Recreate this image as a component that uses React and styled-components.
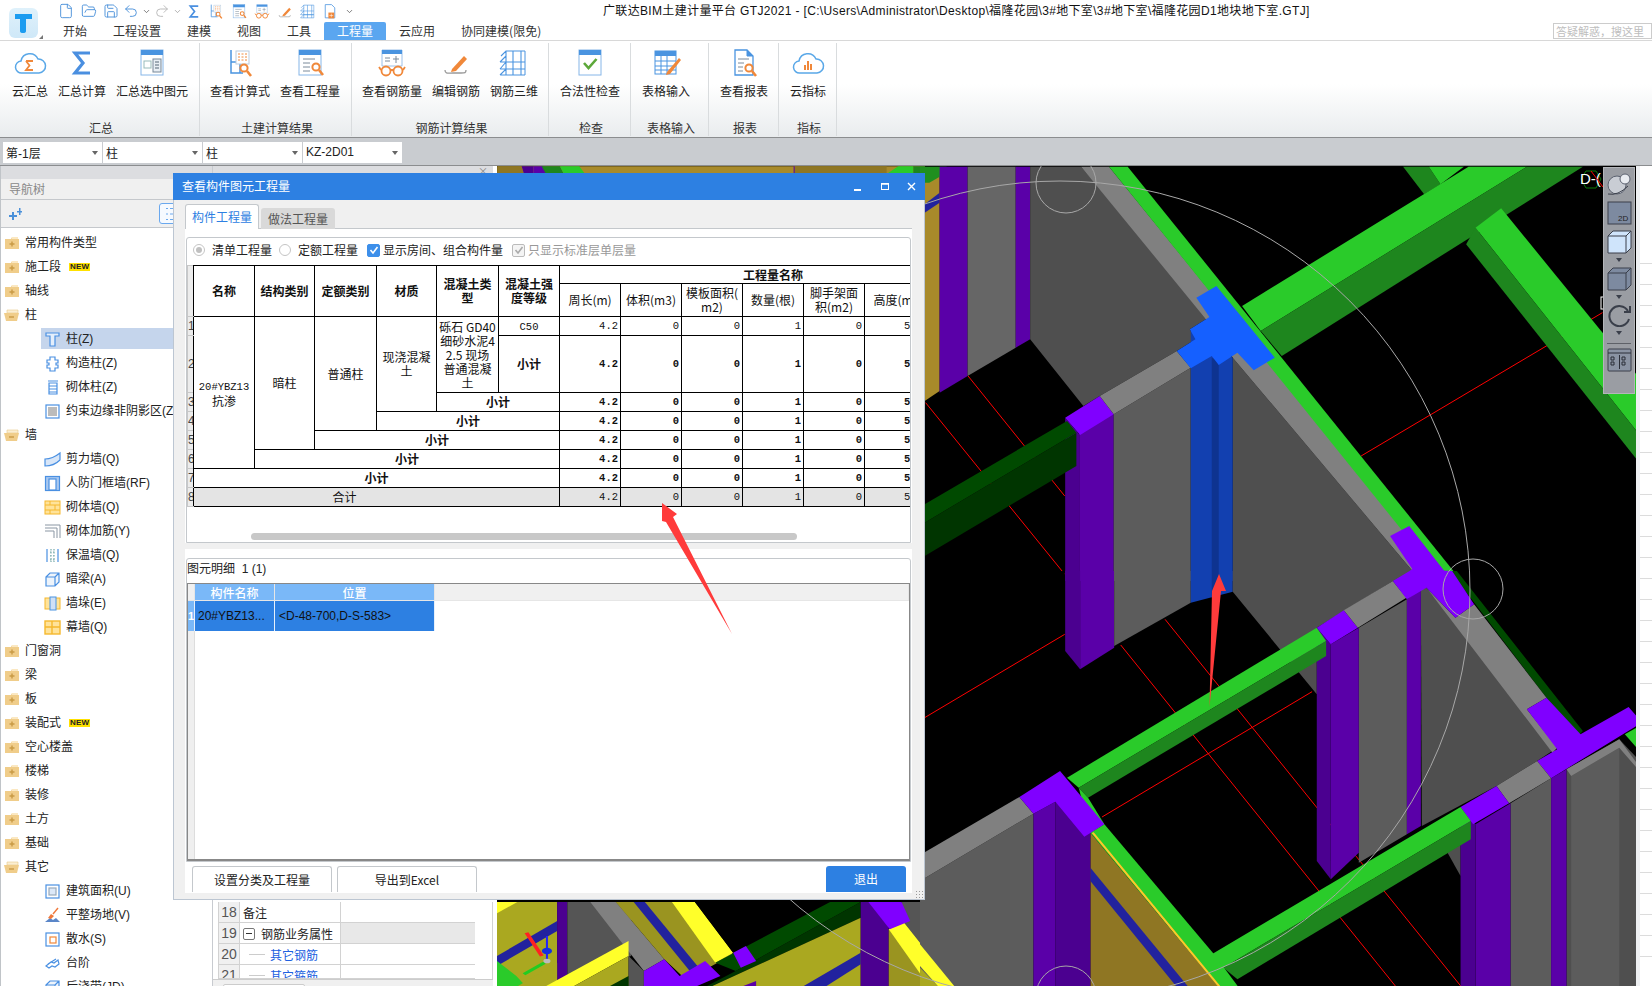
import React from "react";
import styled, { createGlobalStyle } from "styled-components";
import { File, FolderOpen, Save, Undo2, Redo2, ChevronDown } from "lucide-react";

const Global = createGlobalStyle`
  html, body { margin: 0; padding: 0; background: #fff; }
  * { box-sizing: border-box; }
  #root { width: 1652px; height: 986px; }
`;

const CJK = `"Noto Sans CJK SC", "Liberation Sans", sans-serif`;
const LAT = `"Liberation Sans", "Noto Sans CJK SC", sans-serif`;
const MONO = `"Liberation Mono", "Noto Sans CJK SC", monospace`;

const Page = styled.div`
  position: relative; width: 1652px; height: 986px; overflow: hidden;
  display: flex; flex-direction: column;
  font: 12px/1.2 ${CJK}; color: #222; background: #fff;
`;

/* ---------- header ---------- */
const Header = styled.header`
  display: flex; height: 41px; border-bottom: 1px solid #d8d8d8; flex: none;
`;
const LogoCell = styled.div`
  width: 50px; flex: none; padding: 8px 0 0 9px; position: relative;
  &::after { content: ""; position: absolute; right: 7px; bottom: 1px; border: 2px solid transparent; border-right-color: #777; border-bottom-color: #777; }
`;
const HeadRight = styled.div`flex: 1; display: flex; flex-direction: column; min-width: 0;`;
const QuickRow = styled.div`display: flex; align-items: center; height: 22px; position: relative;`;
const QuickIcons = styled.div`display: flex; align-items: center; width: 553px; padding-left: 4px; gap: 0; flex: none; color: #4a90d9;`;
const QuickSlot = styled.span`
  width: ${p => p.$w || 23}px; height: 17px; display: flex; align-items: center; justify-content: center; flex: none;
`;
const AppTitle = styled.div`font: 12px/21px ${LAT}; color: #111; white-space: nowrap; letter-spacing: 0.34px;`;
const TabRow = styled.nav`display: flex; align-items: flex-end; height: 18px;`;
const TabItem = styled.div`
  padding: 0 13px; height: 18px; line-height: 18px; white-space: nowrap; color: ${p => (p.$active ? "#fff" : "#333")};
  background: ${p => (p.$active ? "#5aa6f0" : "transparent")}; border-radius: 2px 2px 0 0;
`;
const AskBox = styled.div`
  margin-left: auto; width: 99px; height: 16px; margin-bottom: 1px; border: 1px solid #ccc; color: #bdbdbd;
  font-size: 11px; line-height: 14px; padding-left: 2px; white-space: nowrap; overflow: hidden;
`;

/* ---------- ribbon ---------- */
const Ribbon = styled.section`
  display: flex; height: 97px; flex: none; border-bottom: 1px solid #8b8d8f;
  background: linear-gradient(#fff 0%, #fff 45%, #e9ecee 100%);
`;
const RibbonGroup = styled.div`
  width: ${p => p.$w}px; flex: ${p => (p.$w ? "none" : 1)}; padding: 2px 0 1px; display: flex; flex-direction: column;
`;
const GroupInner = styled.div`
  flex: 1; display: flex; flex-direction: column; border-right: 1px solid ${p => (p.$last ? "transparent" : "#d9dcde")};
`;
const GroupButtons = styled.div`flex: 1; display: flex; padding-left: ${p => p.$pl || 0}px;`;
const RibbonButton = styled.div`
  width: ${p => p.$w}px; flex: none; display: flex; flex-direction: column; align-items: center; padding-top: 5px; white-space: nowrap;
  svg { display: block; height: 30px; margin-bottom: 6px; }
`;
const GroupLabel = styled.div`height: 20px; line-height: 23px; padding-left: 3px; text-align: center; color: #333;`;

/* ---------- combo bar ---------- */
const ComboBar = styled.div`
  height: 27px; flex: none; background: #c9ccd0; display: flex; gap: 1px; padding: 4px 0 0 3px;
`;
const Combo = styled.div`
  width: 99px; height: 21px; background: #fff; padding-left: 3px; line-height: 21px; position: relative;
  font-family: ${LAT}; font-size: 12px; color: #222;
  &::after { content: ""; position: absolute; right: 4px; top: 9px; border: 3px solid transparent; border-top: 4px solid #666; }
  span { font-family: ${CJK}; }
`;

/* ---------- main ---------- */
const Main = styled.main`flex: 1; display: flex; min-height: 0; border-top: 1px solid #8b8d8f;`;

const Nav = styled.aside`width: 212px; flex: none; display: flex; flex-direction: column; overflow: hidden; border-left: 1px solid #c0c4c8; background: #fff;`;
const NavStrip = styled.div`height: 13px; background: #dcdde0; flex: none;`;
const NavHead = styled.div`
  height: 21px; flex: none; background: #f0f0f0; border-bottom: 1px solid #c5c8cc; color: #888; line-height: 20px; padding-left: 8px;
`;
const NavTools = styled.div`
  height: 28px; flex: none; background: #f0f0f0; border-bottom: 1px solid #c5c8cc; position: relative; padding: 8px 0 0 7px;
`;
const NavToolBtn = styled.div`
  position: absolute; left: 158px; top: 3px; width: 30px; height: 21px; border: 1px solid #6aa8ee; border-radius: 3px; background: #f6faff;
  padding: 3px 0 0 5px; display: flex;
`;
const TreeList = styled.div`padding-top: 3px; flex: 1; overflow: hidden;`;
const TreeRow = styled.div`
  height: 24px; display: flex; align-items: center; white-space: nowrap; position: relative;
  font-family: ${LAT}; padding-left: ${p => (p.$child ? 43 : 3)}px; color: #222;
  ${p => p.$selected && `&::before { content: ""; position: absolute; left: 40px; right: 0; top: 1px; bottom: 2px; background: #c5d5ec; }`}
  > * { position: relative; }
  svg { flex: none; margin-right: 5px; }
`;
const NewBadge = styled.span`
  margin-left: 8px; background: #ffe100; color: #222; font: bold 8px/8px ${LAT}; padding: 0 1px; letter-spacing: 0.2px;
`;

const Props = styled.section`
  width: 285px; flex: none; display: flex; flex-direction: column; border-left: 1px solid #c8cbd0; overflow: hidden; background: #fff;
`;
const PropsTop = styled.div`height: 12px; background: #dcdde0; flex: none; margin-right: 4px; color: #888; text-align: right; padding-right: 5px; font-size: 10px; line-height: 10px;`;
const PropsGrid = styled.div`margin: auto 4px 0 0; padding-left: 5px; padding-right: 17px; background: #fff; border-right: 1px solid #d2d2d2;`;
const PropsRow = styled.div`
  display: grid; grid-template-columns: 21px 101px 136px; height: ${p => p.$h || 21}px; border-bottom: 1px solid #d2d2d2; border-left: 1px solid #d2d2d2; overflow: hidden;
`;
const PropsNum = styled.div`background: #f0f0f0; color: #555; font: 14px/21px ${LAT}; text-align: center; border-right: 1px solid #d2d2d2;`;
const PropsName = styled.div`
  line-height: 21px; padding-left: ${p => (p.$sub ? 30 : 3)}px; color: ${p => (p.$sub ? "#2060e0" : "#222")}; white-space: nowrap; position: relative; border-right: 1px solid #d2d2d2;
  background: #fff; display: flex; align-items: center;
  ${p => p.$sub && `&::before { content: ""; position: absolute; left: 9px; top: 10px; width: 16px; height: 1px; background: #ccc; }`}
`;
const PropsVal = styled.div`background: ${p => (p.$group ? "#e8e8e8" : "#fff")}; border-right: 1px solid #d2d2d2;`;
const MinusBox = styled.span`
  width: 12px; height: 12px; border: 1px solid #777; border-radius: 2px; margin-right: 6px; position: relative; flex: none;
  &::after { content: ""; position: absolute; left: 2px; top: 4px; width: 6px; height: 1px; background: #333; }
`;
const PropsScroll = styled.div`height: 7px; background: #f0f0f0; flex: none; margin-right: 4px; border-top: 1px solid #ccc; padding: 4px 0 0 10px;
  &::after { content: ""; display: block; width: 80px; height: 6px; background: #fff; border: 1px solid #ccc; border-radius: 2px; }
`;

const CanvasWrap = styled.section`width: 1139px; flex: none; position: relative; background: #000; overflow: hidden;`;
const CanvasSvg = styled.svg`display: block; position: absolute; left: 0; top: 0;`;
const ViewBar = styled.div`
  position: absolute; left: 1106px; top: 1px; width: 32px; height: 227px; background: #9a9da3; border: 1px solid #b4b6ba;
  display: flex; flex-direction: column; align-items: center; padding-top: 4px;
`;
const ViewGap = styled.div`height: ${p => p.$h}px; flex: none;`;
const ViewRule = styled.div`width: 24px; height: 1px; background: #5e6168; margin: 3px 0 4px; flex: none;`;
const ViewCaret = styled.div`
  width: 0; height: 0; border: 3px solid transparent; border-top: 4px solid #3a3f4a; border-bottom: 0; margin: 4px 0 5px; flex: none;
`;

const SidePanel = styled.aside`flex: 1; background: #fff; border-left: 4px solid #eef0f2; position: relative; overflow: hidden; padding-top: 77px;`;
const SideRow = styled.div`height: 21px; border-bottom: 1px solid #dcdcdc;`;
const SideThumb = styled.div`position: absolute; left: -4px; top: 374px; width: 4px; height: 100px; background: #5a6470;`;

/* ---------- dialog ---------- */
const Dialog = styled.section`
  position: absolute; left: 173px; top: 173px; width: 752px; height: 727px; background: #f0f0f0;
  border: 1px solid #bcc6d2; border-top: 0; display: flex; flex-direction: column;
`;
const DlgTitle = styled.div`
  height: 27px; flex: none; background: #2d80e2; color: #fff; display: flex; align-items: center; padding: 0 8px 0 9px; margin: 0 -1px;
`;
const DlgCtrls = styled.div`margin-left: auto; display: flex; gap: 16px; align-items: center;`;
const DlgBody = styled.div`flex: 1; display: flex; flex-direction: column; padding: 4px 12px 6px 11px; min-height: 0; position: relative;`;
const DlgTabs = styled.div`display: flex; align-items: flex-end; height: 25px; gap: 2px; flex: none; margin-bottom: -1px; position: relative; z-index: 1;`;
const DlgTab = styled.div`
  width: 74px; height: ${p => (p.$active ? 25 : 21)}px; text-align: center;
  line-height: ${p => (p.$active ? 23 : 22)}px; background: ${p => (p.$active ? "#fff" : "#d9d9d9")}; color: ${p => (p.$active ? "#2d80e2" : "#555")};
  border: ${p => (p.$active ? "1px solid #c4c8cc" : "0")}; border-bottom: 0; border-radius: 3px 3px 0 0;
`;
const Sheet = styled.div`
  flex: 1; background: #fff; border-top: 1px solid #c4c8cc; display: flex; flex-direction: column; min-height: 0;
`;
const Panel = styled.div`
  margin: ${p => p.$mt}px 1px 0; height: ${p => p.$h}px; flex: none; border: 1px solid #c4c8cc; border-radius: 3px 3px 0 0;
  display: flex; flex-direction: column; overflow: hidden; background: #fff;
`;
const Options = styled.div`height: 27px; flex: none; display: flex; align-items: center; padding: 0 0 3px 6px; white-space: nowrap;`;
const Radio = styled.span`
  width: 12px; height: 12px; border-radius: 50%; border: 1px solid #c4c4c4; background: #fff; margin-right: 7px; flex: none; position: relative;
  ${p => p.$on && `&::after { content: ""; position: absolute; left: 2px; top: 2px; width: 6px; height: 6px; border-radius: 50%; background: #c0c0c0; }`}
`;
const Check = styled.span`
  width: 13px; height: 13px; border-radius: 2px; flex: none; margin-right: 3px; display: flex; align-items: center; justify-content: center;
  background: ${p => (p.$muted ? "#f4f4f4" : "#3d8fea")}; border: 1px solid ${p => (p.$muted ? "#bbb" : "#3d8fea")};
`;
const OptLabel = styled.span`color: ${p => (p.$muted ? "#999" : "#222")}; margin-right: ${p => p.$mr || 0}px;`;

const TableClip = styled.div`height: 243px; flex: none; overflow: hidden;`;
const QtyTable = styled.table`
  border-collapse: collapse; table-layout: fixed; width: 799px; font: 12px/14px ${CJK}; color: #111;
`;
const Td = styled.td`
  border: 1px solid #000; padding: ${p => (p.$pr ? `0 ${p.$pr}px 0 0` : 0)}; text-align: center; vertical-align: middle; overflow: hidden; white-space: nowrap;
  height: ${p => p.$h}px; font-weight: ${p => (p.$b ? 700 : 400)};
  background: ${p => (p.$total ? "#e4e4e4" : "#fff")};
`;
const NumTd = styled(Td)`
  text-align: right; padding-right: 2px; font-family: ${MONO}; font-size: 10.5px;
`;
const MonoLine = styled.span`font-family: ${MONO}; font-size: 10.5px;`;
const IdxTd = styled.td`
  border: 1px solid #c8c8c8; border-right: 1px solid #000; background: #ececec; padding: 0; font: 12px/14px ${LAT}; color: #444; text-align: left; overflow: hidden;
  height: ${p => p.$h}px;
`;
const HBar = styled.div`flex: 1; padding: 25px 0 0 64px;
  &::after { content: ""; display: block; width: 546px; height: 7px; border-radius: 4px; background: #c8c8c8; }
`;
const HBarWrap = styled.div`height: 35px; flex: none; display: flex;`;
const Split = styled.div`height: 6px; flex: none; background: #f0f0f0;`;
const PanelHead = styled.div`height: 24px; flex: none; line-height: 20px; font-family: ${LAT}; white-space: nowrap;`;
const ItemGrid = styled.div`flex: 1; border: 1px solid #888; border-bottom-width: 2px; background: #fff; position: relative;
  display: grid; grid-template-columns: 7px 80px 160px 1fr; grid-template-rows: 17px 30px 1fr; `;
const GridHead = styled.div`
  background: ${p => (p.$blank ? "#f0f0f0" : "#7ab8f8")}; color: #fff; text-align: center; line-height: 17px; font-weight: 500; border-right: 1px solid #e6e6e6; border-bottom: 1px solid #e6e6e6;
`;
const GridCell = styled.div`
  background: ${p => (p.$num ? "#7ab8f8" : "#2d80e2")}; color: ${p => (p.$num ? "#fff" : "#111")}; font: ${p => (p.$num ? "bold 11px/30px" : "12px/30px")} ${LAT};
  padding-left: ${p => p.$pl || 0}px; border-right: 1px solid #e6f0fb; white-space: nowrap; overflow: hidden;
`;
const GridIdx = styled.div`background: #efefef; border-right: 1px solid #ddd;`;
const DlgFooter = styled.div`height: 30px; flex: none; display: flex; gap: 5px; padding: 4px 6px 0 7px;`;
const DlgButton = styled.div`
  width: ${p => p.$w || 140}px; height: 26px; text-align: center; line-height: 25px; border-radius: 3px 3px 0 0;
  border: ${p => (p.$primary ? "0" : "1px solid #c4c8cc")}; border-bottom: 0;
  background: ${p => (p.$primary ? "#2d80e2" : "#fff")}; color: ${p => (p.$primary ? "#fff" : "#222")};
  margin-left: ${p => (p.$primary ? "auto" : 0)};
`;
const Grip = styled.div`
  position: absolute; right: 0; bottom: 0; width: 9px; height: 9px; background-image: radial-gradient(#999 0.8px, transparent 1px); background-size: 3px 3px;
`;
const Overlay = styled.svg`position: absolute; left: 0; top: 0; pointer-events: none;`;

/* ---------- icons ---------- */
const BL = "#4a94e0", OR = "#f0883a";
const Ico = ({ children }) => <svg width={34} height={30} viewBox="0 0 34 30" fill="none">{children}</svg>;
const Cloud = ({ c = "#5aa8e8" }) => <path d="M9 25 a6 6 0 0 1 -1-12 a9 9 0 0 1 17-2 a7 7 0 0 1 1 14 z" stroke={c} strokeWidth="1.5" fill="#fff" />;
const Mag = ({ x = 24, y = 22 }) => <g stroke={OR} strokeWidth="2" fill="none"><circle cx={x} cy={y} r="3.6" /><path d={`M${x + 3} ${y + 3} l4 5`} strokeWidth="2.6" /></g>;
const Win = () => <g><rect x="6" y="2" width="22" height="25" fill="#fff" stroke="#86b6e8" /><rect x="6" y="2" width="22" height="5" fill={BL} /></g>;
const icons = {
  cloudSum: <Ico><Cloud /><path d="M13 13 h7 M13 13 l3.5 4.5 -3.5 4.5 h7" stroke={OR} strokeWidth="1.8" /></Ico>,
  sigma: <Ico><path d="M25 5 H10 L18 15 L10 25 H25" stroke="#4a8fe0" strokeWidth="3.2" strokeLinejoin="miter" /></Ico>,
  winCalc: <Ico><Win /><rect x="9" y="13" width="7" height="7" stroke="#9bb" /><rect x="18" y="11" width="8" height="13" fill="#e8eef4" stroke="#789" /><path d="M20 14 h4 M20 17 h4 M20 20 h4" stroke="#567" /></Ico>,
  calcFormula: <Ico><path d="M8 2 v23 h12 M8 14 h9 v11" stroke={BL} strokeWidth="1.5" /><rect x="13" y="3" width="13" height="13" stroke="#bcd" fill="#fff" /><path d="M15 6 h9 M15 9 h9 M15 12 h9" stroke={OR} strokeDasharray="2 1.5" /><Mag x={21} y={20} /></Ico>,
  qty: <Ico><Win /><path d="M10 11 h12 M10 15 h7 M10 19 h7 M10 23 h7" stroke="#7a8a9a" /><Mag x={23} y={19} /></Ico>,
  rebarQty: <Ico><path d="M7 2 h20 v16 h-20 z" fill="#fff" stroke="#9cc0e8" /><rect x="7" y="2" width="20" height="4" fill={BL} /><path d="M10 10 h5 M10 13 h5 M21 8 v7 M18 11 h6" stroke="#7a8a9a" /><g stroke={OR} strokeWidth="1.8"><circle cx="11" cy="23" r="4.5" /><circle cx="23" cy="23" r="4.5" /><path d="M15 22 h4 M6 22 l-2-3 M28 22 l2-3" /></g></Ico>,
  edit: <Ico><path d="M6 22 c0 4 3 3 8 3 h8 c4 0 5 0 5-3" stroke="#999" strokeWidth="1.3" /><path d="M13 21 l12-13 3 3 -11 12 -5 1 z" fill={OR} /></Ico>,
  rebar3d: <Ico><path d="M9 3 v24 M16 3 v24 M24 3 v24 M4 8 L9 3 H28 M3 14 H28 M3 21 H28 M3 27 H28 M3 14 L9 8 M3 21 L9 14 M3 27 L9 21 L28 21" stroke={BL} strokeWidth="1.1" /><path d="M28 3 v24" stroke={BL} /></Ico>,
  check: <Ico><Win /><path d="M11 15 l4.5 5 8-9" stroke="#5da83a" strokeWidth="2.6" /></Ico>,
  tableIn: <Ico><rect x="6" y="3" width="21" height="23" fill="#fff" stroke={BL} /><rect x="6" y="3" width="21" height="5" fill={BL} /><path d="M6 13 h21 M6 18 h21 M6 22 h21 M12 8 v18 M18 8 v18" stroke={BL} /><path d="M18 24 l12-14 2 2 -11 14 -4 1 z" fill={OR} /></Ico>,
  report: <Ico><path d="M8 2 h12 l6 6 v19 H8 z" fill="#fff" stroke={BL} strokeWidth="1.3" /><path d="M20 2 v6 h6" fill={BL} stroke={BL} /><path d="M11 11 h11 M11 15 h6 M11 19 h5 M11 23 h5" stroke="#7a8a9a" /><Mag x={22} y={20} /></Ico>,
  cloudBars: <Ico><Cloud /><path d="M14 22 v-5 M17 22 v-9 M20 22 v-6" stroke={OR} strokeWidth="2" /></Ico>,
  docPlus: <Ico><path d="M8 2 h12 l6 6 v19 H8 z" fill="#fff" stroke={BL} strokeWidth="1.5" /><rect x="14" y="17" width="11" height="11" fill={OR} /><path d="M16 22.5 h7 M19.5 19 v7" stroke="#fff" /></Ico>,
};
const Mini = ({ name }) => <svg width="18" height="17" viewBox="0 0 34 30" fill="none">{icons[name].props.children}</svg>;

const FolderClosed = () => (
  <svg width="16" height="14" viewBox="0 0 16 14"><path d="M1 3 h6 l1-2 h6 v2 h1 v10 H1z" fill="#f0cd8a" /><path d="M8 1 h6 v2 H8z" fill="#fbe8c2" /><path d="M5.5 8 h5 M8 5.5 v5" stroke="#c99a45" strokeWidth="1.4" /></svg>
);
const FolderOpened = () => (
  <svg width="16" height="14" viewBox="0 0 16 14"><path d="M3 2 h11 v3 H3z" fill="#fbeed2" stroke="#e8c98a" strokeWidth="0.6" /><path d="M0 5 h15 l-2 8 H2z" fill="#f0cd8a" /><path d="M5 9 h5" stroke="#c99a45" strokeWidth="1.4" /></svg>
);
const TI = ({ children }) => <svg width="17" height="17" viewBox="0 0 17 17" fill="none" stroke="#4a90e2" strokeWidth="1.2">{children}</svg>;
const Y = "#f5b82e";
const treeIcons = {
  col: <TI><path d="M2 2 h13 v3 h-4 v10 H6 V5 H2z" fill="#e4eefb" /></TI>,
  gz: <TI><path d="M6 2 h5 v3 h3 v3 h-2 v2 h2 v3 h-3 v3 H6 v-3 H3 v-3 h2 V8 H3 V5 h3z" /></TI>,
  brick: <TI><path d="M4 2 h10 M5 4 h8 v11 H5z M5 7 h8 M5 10 h8 M5 13 h8" /></TI>,
  nonshade: <TI><rect x="2" y="2" width="13" height="13" /><rect x="4" y="4" width="9" height="9" fill="#bbb" stroke="none" /></TI>,
  shear: <TI><path d="M1 8 c4 0 10-2 15-6 v7 c-4 4-10 6-15 6z" fill="#d8e6f8" /></TI>,
  door: <TI><rect x="1.5" y="1.5" width="14" height="14" fill="#a9c8f0" /><rect x="5" y="4" width="7" height="11" fill="#fff" /></TI>,
  wall: <svg width="17" height="17" viewBox="0 0 17 17" fill="#ffe39a" stroke={Y}><rect x="1" y="2" width="15" height="13" /><path d="M1 6 h15 M1 11 h15 M6 2 v4 M11 6 v5 M6 11 v4" /></svg>,
  bars: <svg width="17" height="17" viewBox="0 0 17 17" fill="none" stroke="#8a96a3"><path d="M1 2 h15 v13 M1 5 h12 v10 M1 8 h9 v7" /></svg>,
  insul: <TI><path d="M3 2 v13 M14 2 v13" /><path d="M7 2 v13 M10 2 v13 M6 5 h5 M6 9 h5 M6 13 h5" strokeDasharray="1.5 1.5" stroke="#7aa" /></TI>,
  beam: <TI><path d="M2 6 l4-4 h9 v9 l-4 4 H2z M2 6 h9 v9 M11 6 l4-4" fill="#eef4fb" /></TI>,
  pier: <svg width="17" height="17" viewBox="0 0 17 17" fill="#ffe39a" stroke={Y}><rect x="1" y="3" width="15" height="11" /><rect x="6" y="2" width="6" height="13" fill="#cfe0f6" stroke={BL} /></svg>,
  curtain: <svg width="17" height="17" viewBox="0 0 17 17" fill="#ffe39a" stroke={Y} strokeWidth="1.4"><rect x="1" y="2" width="15" height="13" /><path d="M1 8 h15 M8 2 v13" /></svg>,
  area: <TI><rect x="2" y="2" width="13" height="13" /><rect x="5" y="5" width="7" height="7" fill="#dce8f8" stroke="#9ab" /></TI>,
  level: <svg width="17" height="17" viewBox="0 0 17 17"><path d="M1 15 l5-4 3 2 3-2 4 4z" fill="#5a86c8" /><path d="M4 11 l3-4 3 2 -3 3z" fill="#f0783a" /><path d="M9 7 l5-6" stroke="#f0783a" strokeWidth="1.4" /></svg>,
  apron: <TI><rect x="2" y="2" width="13" height="13" /><rect x="6" y="6" width="6" height="6" stroke="#f0883a" /></TI>,
  step: <TI><path d="M2 11 l5-4 3 1 4-3 1 4 -4 3 -3-1 -3 2z M4 9 l8-5" /></TI>,
};

const tree = [
  ["f", "常用构件类型"], ["f", "施工段", 0, 1], ["f", "轴线"], ["o", "柱"],
  ["c", "柱(Z)", "col", 0, 1], ["c", "构造柱(Z)", "gz"], ["c", "砌体柱(Z)", "brick"], ["c", "约束边缘非阴影区(Z)", "nonshade"],
  ["o", "墙"], ["c", "剪力墙(Q)", "shear"], ["c", "人防门框墙(RF)", "door"], ["c", "砌体墙(Q)", "wall"], ["c", "砌体加筋(Y)", "bars"], ["c", "保温墙(Q)", "insul"],
  ["c", "暗梁(A)", "beam"], ["c", "墙垛(E)", "pier"], ["c", "幕墙(Q)", "curtain"],
  ["f", "门窗洞"], ["f", "梁"], ["f", "板"], ["f", "装配式", 0, 1], ["f", "空心楼盖"], ["f", "楼梯"], ["f", "装修"], ["f", "土方"], ["f", "基础"], ["o", "其它"],
  ["c", "建筑面积(U)", "area"], ["c", "平整场地(V)", "level"], ["c", "散水(S)", "apron"], ["c", "台阶", "step"], ["c", "后浇带(JD)", "beam"],
];

const ribbon = [
  { w: 200, pl: 5, label: "汇总", items: [["云汇总", 50, "cloudSum"], ["汇总计算", 54, "sigma"], ["汇总选中图元", 86, "winCalc"]] },
  { w: 152, pl: 5, label: "土建计算结果", items: [["查看计算式", 70, "calcFormula"], ["查看工程量", 70, "qty"]] },
  { w: 197, pl: 2, label: "钢筋计算结果", items: [["查看钢筋量", 76, "rebarQty"], ["编辑钢筋", 52, "edit"], ["钢筋三维", 64, "rebar3d"]] },
  { w: 82, label: "检查", items: [["合法性检查", 82, "check"]] },
  { w: 78, label: "表格输入", items: [["表格输入", 70, "tableIn"]] },
  { w: 70, label: "报表", items: [["查看报表", 70, "report"]] },
  { w: 58, label: "指标", items: [["云指标", 58, "cloudBars"]] },
];

/* ---------- 3D canvas data, in the crop coordinates of each canvas region ---------- */
const G = "#2acb2a", GD = "#1e861e", GX = "#004a00", GXX = "#003500", P = "#5a00a8", PD = "#4b0090", PB = "#8000ff",
  W = "#5c5c5c", WD = "#4f4f4f", B = "#808080", GO = "#a88a2a", GOD = "#8f7623", U = "#22229e", YE = "#ffff2a", OL = "#aaa820", OL2 = "#9a9420";

const polysTop = [
  [GO, "10,60 42,30 42,690 10,720"], [U, "10,130 42,95 42,125 10,155"], ["#1f8f1f", "0,17 57,17 57,35 20,65 0,65"],
  [P, "42,17 102,17 102,645 42,695"], ["#666", "102,17 205,17 205,560 102,645"], [P, "205,17 236,17 236,535 205,560"],
  [WD, "236,17 345,17 620,468 578,505 590,535 550,570 385,705 350,735 236,535"],
  [WD, "670,590 1055,1230 1020,1260 670,1260"],
  [B, "345,17 405,17 1125,1260 1070,1255 670,590 610,470"], [G, "405,17 445,17 1160,1260 1120,1260"],
  [GD, "1035,17 1090,17 1115,70 1080,100"], [G, "1090,17 1165,17 1115,70"],
  [G, "690,435 1175,17 1300,17 730,510"], [GD, "730,510 1300,17 1420,17 775,585"],
  [G, "1190,200 1245,142 1535,640 1535,810"], [GD, "1190,200 1535,810 1535,895 1170,250"],
  [P, "341,770 415,760 415,1260 341,1260"], [PD, "311,770 341,820 341,1260 311,1260"],
  [W, "415,760 580,620 580,1260 415,1260"],
  [GX, "10,1030 315,780 335,815 10,1085"], [GXX, "10,1085 335,815 335,915 10,1185"],
  [PB, "311,770 385,705 415,760 343,822"], [B, "385,705 550,570 580,620 415,760"],
  ["#1240b0", "580,505 670,590 670,1260 580,1260"], ["#0e3390", "625,590 640,600 640,1260 625,1260"],
  ["#1560ff", "592,410 635,375 760,590 715,628 680,575 640,612 625,585 580,622 550,570 590,535 578,505 620,468"],
  [PB, "1007,1125 1048,1095 1140,1260 1015,1260 1055,1225"],
];
const polysLow = [
  [P, "343,0 416,0 416,230 343,295"], [PD, "311,0 343,0 343,295 311,240"],
  [W, "416,0 580,0 580,95 416,225"], ["#1240b0", "580,0 670,0 670,62 580,95"], ["#0e3390", "625,0 640,0 640,75 625,80"],
  [WD, "670,0 1055,0 1013,30 850,170 850,370 670,62"],
  [WD, "1073,55 1085,50 1365,530 1322,570 1235,645 1075,765"],
  [GX, "1135,0 1150,0 1420,480 1410,495 1342,380 1190,100"],
  [B, "1085,50 1147,140 1187,100 1342,380 1300,415 1365,530 1355,545"],
  [W, "940,170 1043,85 1043,790 940,875"], [P, "1043,85 1073,55 1073,765 1043,790"],
  [P, "880,220 940,170 940,845 880,925"], [PD, "850,170 880,220 880,925 850,870"],
  [G, "315,620 850,170 870,210 340,650"], [GD, "340,650 870,210 870,255 360,680"],
  [PB, "850,170 908,118 938,170 880,220"], [B, "908,118 1013,30 1042,80 938,170"],
  [PB, "1013,30 1055,-5 1140,0 1187,100 1147,140 1085,50 1043,85"],
  [WD, "1120,820 1158,800 1158,915"],
  [WD, "1385,595 1498,505 1535,560 1535,1248 1385,1248"], [W, "1395,615 1498,530 1498,1248 1395,1248"],
  [B, "1385,595 1498,505 1535,575 1535,590 1498,530 1395,615"],
  [W, "1265,697 1352,622 1352,1248 1265,1248"], [P, "1352,622 1385,595 1385,1248 1352,1248"],
  [P, "1190,760 1265,697 1265,1248 1190,1248"], [PD, "1158,708 1190,760 1190,1248 1158,1248"],
  [G, "1510,490 1535,470 1535,530"],
  [PB, "1300,415 1342,380 1415,490 1518,408 1535,435 1535,465 1352,622 1322,570 1365,535"],
  [B, "1235,645 1322,570 1352,622 1262,697"], [PB, "1158,708 1235,645 1262,697 1185,760"],
  [G, "1158,708 1180,750 650,1190 625,1150"], [GD, "1180,750 1180,805 680,1225 650,1190"],
  [W, "0,930 243,728 243,1248 0,1248"], [B, "0,852 213,678 243,728 0,930"],
  [GOD, "365,785 640,1248 365,1248"], [U, "365,890 575,1248 550,1248 365,930"],
  [PD, "290,692 365,785 365,1248 290,1248"], [P, "243,728 290,692 290,1248 243,1248"],
  [G, "395,760 630,1150 682,1248 640,1248 365,785"],
  [G, "340,650 360,680 395,760 365,785"],
  [PB, "213,678 300,600 395,760 352,797 290,692 243,728"],
  [OL, "0,1190 40,1248 0,1248"], [YE, "0,1120 75,1248 40,1248 0,1185"],
];
const polysStrip = [
  [OL, "582,18 700,18 700,273 582,273"], [YE, "582,18 622,18 582,52"], [U, "582,180 700,75 700,105 582,210"],
  [G, "582,195 620,240 640,273 582,273"], [PD, "700,18 720,18 720,240 700,260"],
  [OL, "620,273 700,200 700,273"], ["#555", "720,18 845,18 845,180 720,240"], [B, "765,18 815,18 910,190 870,225"],
  [OL2, "815,18 930,18 1045,175 985,225 945,240 910,190"], [U, "850,18 872,18 975,210 960,225"],
  [YE, "925,18 970,18 1045,170 1010,200"], ["#000", "970,18 1235,18 1045,170"],
  [YE, "840,135 675,273 730,273 840,180"], [OL, "840,180 730,273 840,273"], ["#555", "840,180 870,225 870,273 840,273"],
  [GXX, "800,273 840,240 840,273"],
  [GX, "1010,200 1235,18 1295,18 1050,225"], [GXX, "1050,225 1295,18 1295,65 1000,273 990,273"],
  [OL, "1000,273 1295,65 1295,273"], [U, "1180,273 1295,170 1295,205 1225,273"],
  [PD, "1295,18 1350,18 1350,273 1295,273"], [PB, "1045,170 1070,150 1090,195 1060,215"],
  [OL2, "1350,100 1385,80 1480,273 1350,273"], [YE, "1350,100 1380,78 1480,273 1430,273"],
  ["#555", "1375,18 1568,18 1568,273 1480,273 1380,80"], [PB, "1310,18 1375,18 1392,75 1352,100"],
  [PB, "870,225 910,190 940,240 990,195 1020,240 970,273 870,273"], [P, "1060,273 1090,255 1090,273"],
];
const polysTopStrip = [
  [GO, "172,46 1455,46 1455,69 172,69"], [GOD, "172,46 245,46 252,69 172,69"], [PD, "245,46 280,46 280,69 252,69"],
  [P, "280,46 310,46 320,69 280,69"], [GD, "305,46 360,46 372,69 318,69"], [G, "360,46 418,46 435,69 372,69"],
  [GOD, "1062,46 1340,46 1340,69 1062,69"], [P, "1061,46 1064,46 1064,69 1061,69"], [G, "1340,69 1375,46 1420,46 1420,69"], [GD, "1420,46 1455,46 1455,69 1420,69"],
];
const redTop = ["12,725 310,1240", "103,645 310,1005", "945,885 1462,455"];
const redLow = ["10,440 310,190", "430,222 1020,1248", "525,145 1160,1248", "840,362 390,738"];

const Polys = ({ data }) => data.map(([f, pts], i) => <polygon key={i} fill={f} points={pts} />);
const Lines = ({ data, stroke = "#f00" }) => data.map((pts, i) => <polyline key={i} points={pts} fill="none" stroke={stroke} strokeWidth="1" vectorEffect="non-scaling-stroke" />);

const Vals = ({ b, total, h, v = ["4.2", "0", "0", "1", "0", "5.3", "0"] }) => v.map((x, i) => <NumTd key={i} $b={b} $total={total} $h={h}>{x}</NumTd>);

export default function App() {
  return (
    <Page>
      <Global />
      <Header>
        <LogoCell>
          <svg width="29" height="30" viewBox="0 0 29 30">
            <defs><linearGradient id="lg" x1="0" y1="0" x2="0" y2="1"><stop offset="0" stopColor="#dff1fb" /><stop offset="1" stopColor="#cfe8f8" /></linearGradient></defs>
            <rect width="29" height="30" rx="6" fill="url(#lg)" />
            <path d="M6 6 h17 v5 h-6 v12 q0 2 -3 2 q-3 0 -3 -2 V11 H6z" fill="#1c9cf0" />
          </svg>
        </LogoCell>
        <HeadRight>
          <QuickRow>
            <QuickIcons>
              <QuickSlot $w={23}><File size={16} strokeWidth={1.4} /></QuickSlot>
              <QuickSlot $w={23}><FolderOpen size={16} strokeWidth={1.4} /></QuickSlot>
              <QuickSlot $w={22}><Save size={16} strokeWidth={1.4} /></QuickSlot>
              <QuickSlot $w={18}><Undo2 size={16} strokeWidth={1.4} /></QuickSlot>
              <QuickSlot $w={13}><ChevronDown size={9} color="#555" /></QuickSlot>
              <QuickSlot $w={18}><Redo2 size={16} strokeWidth={1.4} color="#b8b8b8" /></QuickSlot>
              <QuickSlot $w={13}><ChevronDown size={9} color="#999" /></QuickSlot>
              <QuickSlot $w={20}><Mini name="sigma" /></QuickSlot>
              <QuickSlot $w={23}><Mini name="calcFormula" /></QuickSlot>
              <QuickSlot $w={23}><Mini name="qty" /></QuickSlot>
              <QuickSlot $w={23}><Mini name="rebarQty" /></QuickSlot>
              <QuickSlot $w={23}><Mini name="edit" /></QuickSlot>
              <QuickSlot $w={23}><Mini name="rebar3d" /></QuickSlot>
              <QuickSlot $w={22}><Mini name="docPlus" /></QuickSlot>
              <QuickSlot $w={16}><ChevronDown size={9} color="#555" /></QuickSlot>
            </QuickIcons>
            <AppTitle>广联达BIM土建计量平台 GTJ2021 - [C:\Users\Administrator\Desktop\福隆花园\3#地下室\3#地下室\福隆花园D1地块地下室.GTJ]</AppTitle>
          </QuickRow>
          <TabRow>
            {["开始", "工程设置", "建模", "视图", "工具", "工程量", "云应用", "协同建模(限免)"].map(t => (
              <TabItem key={t} $active={t === "工程量"}>{t}</TabItem>
            ))}
            <AskBox>答疑解惑，搜这里</AskBox>
          </TabRow>
        </HeadRight>
      </Header>

      <Ribbon>
        {ribbon.map(g => (
          <RibbonGroup key={g.label} $w={g.w}>
            <GroupInner>
              <GroupButtons $pl={g.pl}>
                {g.items.map(([label, w, ic]) => (
                  <RibbonButton key={label} $w={w}>{icons[ic]}{label}</RibbonButton>
                ))}
              </GroupButtons>
              <GroupLabel>{g.label}</GroupLabel>
            </GroupInner>
          </RibbonGroup>
        ))}
        <RibbonGroup />
      </Ribbon>

      <ComboBar>
        <Combo><span>第</span>-1<span>层</span></Combo>
        <Combo><span>柱</span></Combo>
        <Combo><span>柱</span></Combo>
        <Combo>KZ-2D01</Combo>
      </ComboBar>

      <Main>
        <Nav>
          <NavStrip />
          <NavHead>导航树</NavHead>
          <NavTools>
            <svg width="14" height="12" viewBox="0 0 14 12" fill="#4a90d9"><path d="M1 7 h3 V4 h2 v3 h3 v2 H6 v3 H4 V9 H1z" /><path d="M9 3 h2 V0 h1.5 v3 H14 v1.5 h-1.5 V7 H11 V4.5 H9z" /></svg>
            <NavToolBtn>
              <svg width="9" height="14" viewBox="0 0 9 14" fill="none" stroke="#6aa8ee"><path d="M1 1.5 h2 M5 1.5 h4 M1 7 h2 M5 7 h4 M1 12.5 h2 M5 12.5 h4" /></svg>
            </NavToolBtn>
          </NavTools>
          <TreeList>
            {tree.map(([kind, label, ic, isNew, sel]) => (
              <TreeRow key={label} $child={kind === "c"} $selected={sel}>
                {kind === "f" && <FolderClosed />}
                {kind === "o" && <FolderOpened />}
                {kind === "c" && treeIcons[ic]}
                <span>{label}</span>
                {isNew ? <NewBadge>NEW</NewBadge> : null}
              </TreeRow>
            ))}
          </TreeList>
        </Nav>

        <Props>
          <PropsTop>×</PropsTop>
          <PropsGrid>
            <PropsRow><PropsNum>18</PropsNum><PropsName>备注</PropsName><PropsVal /></PropsRow>
            <PropsRow><PropsNum>19</PropsNum><PropsName><MinusBox />钢筋业务属性</PropsName><PropsVal $group /></PropsRow>
            <PropsRow><PropsNum>20</PropsNum><PropsName $sub>其它钢筋</PropsName><PropsVal /></PropsRow>
            <PropsRow $h={14}><PropsNum>21</PropsNum><PropsName $sub>其它箍筋</PropsName><PropsVal /></PropsRow>
          </PropsGrid>
          <PropsScroll />
        </Props>

        <CanvasWrap>
          <CanvasSvg width="1139" height="821" viewBox="497 165 1139 821">
            <rect x="497" y="165" width="1139" height="821" fill="#000" />
            <g transform="translate(200 895) scale(.5102 .3333)"><Polys data={polysStrip} /></g>
            <g transform="translate(440 150) scale(.3333)"><Polys data={polysTopStrip} /></g>
            <g transform="translate(920 160) scale(.4668 .3333)">
              <Lines data={redTop} />
              <Polys data={polysTop} />
            </g>
            <g transform="translate(920 570) scale(.4668 .3333)">
              <rect x="0" y="0" width="310" height="900" fill="#000" />
              <Lines data={redLow} />
              <Polys data={polysLow} />
              <polyline points="370,785 642,1248" fill="none" stroke="#ffc62a" strokeWidth="5" />
            </g>
            <g fill="none" stroke="#a8a8a8" strokeWidth="1">
              <circle cx="1060" cy="590" r="410" />
              <circle cx="1066" cy="182" r="30" />
              <circle cx="1473" cy="588" r="30" />
              <circle cx="1066" cy="995" r="30" />
            </g>
            <polygon points="1586,170 1596,170 1601,178 1596,187 1586,187 1581,178" fill="none" stroke="#0a7a0a" />
            <text x="1580" y="183" fill="#fff" fontSize="15" fontFamily="Liberation Sans">D-(</text>
            <path d="M1591 170 L1603 186" stroke="#f00" />
            <rect x="1601" y="296" width="6" height="12" fill="none" stroke="#fff" />
            <g transform="translate(200 895) scale(.5102 .3333)">
              <path d="M640 110 L670 180" stroke="#f22" strokeWidth="8" />
              <path d="M680 120 V190" stroke="#22f" strokeWidth="4" />
              <circle cx="680" cy="165" r="10" fill="#1430e0" />
              <circle cx="680" cy="195" r="7" fill="#bbb" />
              <path d="M675 200 L635 235" stroke="#2c2" strokeWidth="8" />
            </g>
          </CanvasSvg>
          <ViewBar>
            <svg width="26" height="24" viewBox="0 0 26 24"><circle cx="11" cy="13" r="9" fill="#c9cdd4" stroke="#5c6270" /><circle cx="19" cy="7" r="5" fill="#e8ebf0" stroke="#5c6270" /><path d="M2 22 q10 2 20-8" stroke="#3a3f4a" fill="none" /></svg>
            <ViewGap $h={5} />
            <svg width="25" height="24" viewBox="0 0 25 24"><rect x="1" y="1" width="23" height="22" fill="#7d8aa0" stroke="#3a3f4a" /><text x="11" y="20" fontSize="8" fill="#222" fontFamily="Liberation Sans">2D</text></svg>
            <ViewGap $h={5} />
            <svg width="25" height="24" viewBox="0 0 25 24"><path d="M1 6 l5-5 h18 v17 l-5 5 H1z" fill="#cfe4fb" stroke="#3a3f4a" /><path d="M1 6 h18 v17 M19 6 l5-5" stroke="#3a3f4a" fill="none" /></svg>
            <ViewCaret />
            <svg width="25" height="24" viewBox="0 0 25 24"><path d="M1 6 l5-5 h18 v17 l-5 5 H1z" fill="#7d8aa0" stroke="#3a3f4a" /><path d="M1 6 h18 v17 M19 6 l5-5" stroke="#3a3f4a" fill="none" /></svg>
            <ViewCaret />
            <svg width="25" height="23" viewBox="0 0 25 23" fill="none" stroke="#3a3f4a" strokeWidth="2"><path d="M21 7 A10 10 0 1 0 22 15" /><path d="M23 2 v6 h-6" /></svg>
            <ViewCaret />
            <ViewRule />
            <svg width="25" height="24" viewBox="0 0 25 24"><rect x="1" y="1" width="23" height="22" rx="1" fill="#8a93a3" stroke="#3a3f4a" /><path d="M1 5 h23 M12.5 7 v14 M4 9 h3 v3 H4z M4 14 h3 v3 H4z M15 9 h3 v3 h-3z M15 14 h3 v3 h-3z" stroke="#2a2e38" fill="none" /></svg>
          </ViewBar>
        </CanvasWrap>

        <SidePanel>
          <SideThumb />
          {Array.from({ length: 34 }, (_, i) => <SideRow key={i} />)}
        </SidePanel>
      </Main>

      <Dialog>
        <DlgTitle>
          查看构件图元工程量
          <DlgCtrls>
            <svg width="11" height="11" viewBox="0 0 11 11"><path d="M2 9 h7" stroke="#fff" strokeWidth="2" /></svg>
            <svg width="11" height="11" viewBox="0 0 11 11" fill="none" stroke="#fff"><rect x="2.5" y="2.5" width="7" height="6" /><path d="M2 3 h8" strokeWidth="1.5" /></svg>
            <svg width="11" height="11" viewBox="0 0 11 11" stroke="#fff" strokeWidth="1.4"><path d="M2 2 l7 7 M9 2 l-7 7" /></svg>
          </DlgCtrls>
        </DlgTitle>
        <DlgBody>
          <DlgTabs>
            <DlgTab $active>构件工程量</DlgTab>
            <DlgTab>做法工程量</DlgTab>
          </DlgTabs>
          <Sheet>
            <Panel $mt={8} $h={306}>
              <Options>
                <Radio $on /><OptLabel $mr={7}>清单工程量</OptLabel>
                <Radio /><OptLabel $mr={9}>定额工程量</OptLabel>
                <Check><svg width="10" height="10" viewBox="0 0 10 10" fill="none" stroke="#fff" strokeWidth="1.6"><path d="M1.5 5 l2.5 3 4.5-6" /></svg></Check>
                <OptLabel $mr={9}>显示房间、组合构件量</OptLabel>
                <Check $muted><svg width="10" height="10" viewBox="0 0 10 10" fill="none" stroke="#aaa" strokeWidth="1.6"><path d="M1.5 5 l2.5 3 4.5-6" /></svg></Check>
                <OptLabel $muted>只显示标准层单层量</OptLabel>
              </Options>
              <TableClip>
                <QtyTable>
                  <colgroup>
                    {[6, 61, 60, 62, 60, 62, 61, 61, 61, 61, 61, 61, 61, 61].map((w, i) => <col key={i} style={{ width: w }} />)}
                  </colgroup>
                  <tbody>
                    <tr>
                      <IdxTd rowSpan={2} />
                      <Td rowSpan={2} $b>名称</Td><Td rowSpan={2} $b>结构类别</Td><Td rowSpan={2} $b>定额类别</Td><Td rowSpan={2} $b>材质</Td>
                      <Td rowSpan={2} $b>混凝土类<br />型</Td><Td rowSpan={2} $b>混凝土强<br />度等级</Td>
                      <Td colSpan={7} $b $h={18}>工程量名称</Td>
                    </tr>
                    <tr>
                      <Td $h={33}>周长(m)</Td><Td>体积(m3)</Td><Td>模板面积(<br />m2)</Td><Td>数量(根)</Td><Td>脚手架面<br />积(m2)</Td><Td>高度(m)</Td><Td>合计</Td>
                    </tr>
                    <tr>
                      <IdxTd $h={19}>1</IdxTd>
                      <Td rowSpan={6}><MonoLine>20#YBZ13</MonoLine><br />抗渗</Td>
                      <Td rowSpan={5}>暗柱</Td>
                      <Td rowSpan={4}>普通柱</Td>
                      <Td rowSpan={3}>现浇混凝<br />土</Td>
                      <Td rowSpan={2}>砾石 GD40<br />细砂水泥4<br />2.5 现场<br />普通混凝<br />土</Td>
                      <Td><MonoLine>C50</MonoLine></Td>
                      <Vals h={19} />
                    </tr>
                    <tr>
                      <IdxTd $h={57}>2</IdxTd>
                      <Td $b>小计</Td>
                      <Vals b h={57} />
                    </tr>
                    {[2, 3, 4, 5, 6].map(n => (
                      <tr key={n}>
                        <IdxTd $h={19}>{n + 1}</IdxTd>
                        <Td colSpan={n} $b>小计</Td>
                        <Vals b h={19} />
                      </tr>
                    ))}
                    <tr>
                      <IdxTd $h={19}>8</IdxTd>
                      <Td colSpan={6} $total $pr={64}>合计</Td>
                      <Vals total h={19} />
                    </tr>
                  </tbody>
                </QtyTable>
              </TableClip>
              <HBarWrap><HBar /></HBarWrap>
            </Panel>
            <Split />
            <Panel $mt={9} $h={304}>
              <PanelHead>图元明细&nbsp;&nbsp;1 (1)</PanelHead>
              <ItemGrid>
                <GridHead $blank />
                <GridHead>构件名称</GridHead>
                <GridHead>位置</GridHead>
                <GridHead $blank />
                <GridCell $num>1</GridCell>
                <GridCell $pl={3}>20#YBZ13...</GridCell>
                <GridCell $pl={4}>&lt;D-48-700,D-S-583&gt;</GridCell>
                <div />
                <GridIdx />
                <div /><div /><div />
              </ItemGrid>
            </Panel>
            <DlgFooter>
              <DlgButton $w={140}>设置分类及工程量</DlgButton>
              <DlgButton $w={140}>导出到Excel</DlgButton>
              <DlgButton $primary $w={80}>退出</DlgButton>
            </DlgFooter>
          </Sheet>
          <Grip />
        </DlgBody>
      </Dialog>

      <Overlay width="1652" height="986" viewBox="0 0 1652 986">
        <polygon points="662,503 677,514 673,517 732,634 666,522 662,521" fill="#ff3b3b" />
        <polygon points="1219,574 1226,591 1221,591 1209.5,707 1212,591" fill="#ff3b3b" />
      </Overlay>
    </Page>
  );
}
